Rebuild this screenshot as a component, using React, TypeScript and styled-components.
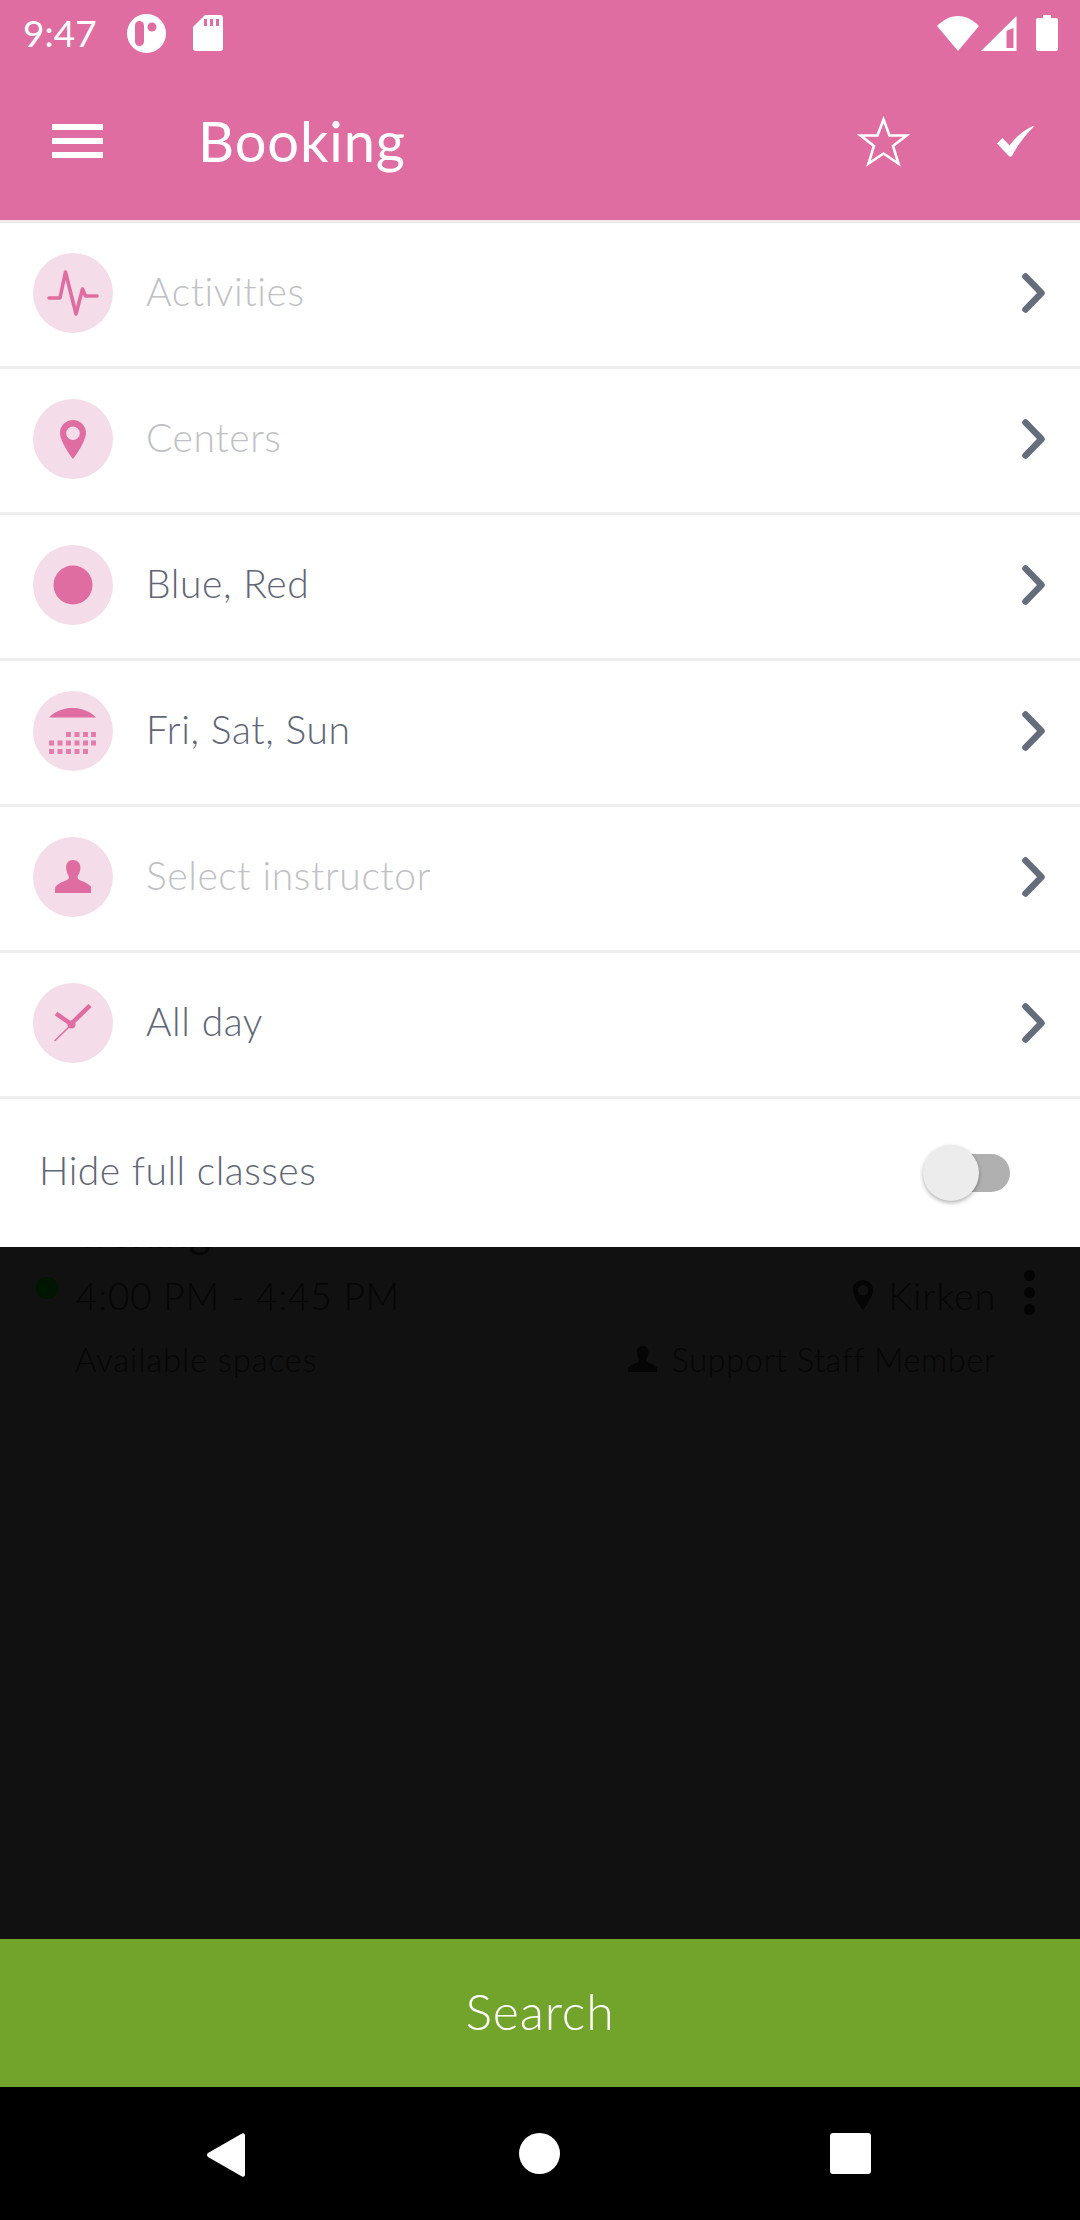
import React from "react";
import styled, { createGlobalStyle } from "styled-components";

const pink = "#df6da2";

const Global = createGlobalStyle`
  html, body { margin: 0; padding: 0; background: #111; }
  body { font-family: "Lato", "Noto Sans", sans-serif; }
`;

const Screen = styled.div`
  width: 1080px;
  height: 2220px;
  display: flex;
  flex-direction: column;
  overflow: hidden;
  background: #111;
`;

const Header = styled.header`
  height: 220px;
  background: ${pink};
  color: #fff;
  display: flex;
  flex-direction: column;
  flex: none;
`;

const StatusBar = styled.div`
  height: 66px;
  padding: 0 22px 0 23px;
  display: flex;
  align-items: center;
  box-sizing: border-box;
`;

const Clock = styled.span`
  font-size: 37px;
  font-weight: 400;
  line-height: 66px;
  width: 104px;
`;

const StatusRight = styled.div`
  margin-left: auto;
  display: flex;
  align-items: center;
`;

const AppBar = styled.div`
  flex: 1;
  display: flex;
  align-items: center;
  padding: 0 46px 4px 52px;
`;

const Title = styled.h1`
  margin: 0 0 0 95px;
  font-size: 56px;
  line-height: 64px;
  font-weight: 400;
  letter-spacing: 0.9px;
  flex: 1;
`;

const BarButton = styled.span<{ $gap?: number }>`
  display: flex;
  margin-right: ${(p) => p.$gap ?? 0}px;
`;

const Panel = styled.section`
  flex: none;
  background: #fff;
  border-top: 3px solid #efe9ee;
`;

const Row = styled.div`
  box-sizing: border-box;
  border-bottom: 3px solid #eeeeee;
  height: 146px;
  padding: 0 35px 3px 33px;
  display: flex;
  align-items: center;
`;

const IconCircle = styled.div`
  width: 80px;
  height: 80px;
  border-radius: 50%;
  background: #f4dce9;
  display: flex;
  align-items: center;
  justify-content: center;
  flex: none;
`;

const RowLabel = styled.span<{ $empty?: boolean }>`
  margin: 0 0 5px 33px;
  flex: 1;
  font-size: 39px;
  font-weight: 300;
  letter-spacing: 0.6px;
  color: ${(p) => (p.$empty ? "#bfc1c6" : "#5f6676")};
`;

const ToggleRow = styled.div`
  height: 148px;
  padding: 0 70px 0 39px;
  display: flex;
  align-items: center;
  justify-content: space-between;
`;

const ToggleLabel = styled.span`
  font-size: 39px;
  font-weight: 300;
  letter-spacing: 0.5px;
  color: #5f6676;
  margin-bottom: 6px;
`;

const Toggle = styled.div`
  position: relative;
  width: 80px;
  height: 38px;
  border-radius: 19px;
  background: #b0b0b0;
`;

const Thumb = styled.div`
  position: absolute;
  left: -7px;
  top: -9px;
  width: 56px;
  height: 56px;
  border-radius: 50%;
  background: #ececec;
  box-shadow: 0 2px 4px rgba(0, 0, 0, 0.3);
`;

const Behind = styled.div`
  flex: 1;
  background: #111;
  color: #060606;
  overflow: hidden;
  display: flex;
  flex-direction: column;
  padding: 0 0 0 36px;
`;

const GhostTitle = styled.div`
  margin: -42px 0 0 39px;
  height: 54px;
  font-size: 42px;
  line-height: 54px;
  font-weight: 400;
`;

const GhostLine = styled.div<{ $top: number }>`
  display: flex;
  align-items: center;
  margin-top: ${(p) => p.$top}px;
  padding-right: 84px;
  position: relative;
`;

const Dot = styled.div`
  width: 22px;
  height: 22px;
  border-radius: 50%;
  background: #001600;
  margin: 0 18px 14px 0;
  flex: none;
`;

const GhostTime = styled.span`
  font-size: 37px;
  font-weight: 300;
  letter-spacing: 0.8px;
`;

const GhostPlace = styled.span`
  font-size: 38px;
  font-weight: 300;
  letter-spacing: 0.7px;
`;

const GhostSmall = styled.span`
  font-size: 33px;
  font-weight: 300;
  letter-spacing: 0.8px;
  margin-left: 39px;
`;

const GhostStaff = styled.span`
  font-size: 32.5px;
  font-weight: 300;
  letter-spacing: 0.6px;
`;

const GhostRight = styled.span`
  margin-left: auto;
  display: flex;
  align-items: center;
  gap: 15px;
`;

const More = styled.div`
  position: absolute;
  right: 45px;
  top: -2px;
  display: flex;
  flex-direction: column;
  gap: 6px;
`;

const MoreDot = styled.i`
  display: block;
  width: 11px;
  height: 11px;
  border-radius: 50%;
  background: #040404;
`;

const SearchBar = styled.button`
  flex: none;
  height: 148px;
  border: 0;
  background: #72a42b;
  color: #fff;
  font-family: inherit;
  font-size: 50px;
  font-weight: 300;
  letter-spacing: 0.8px;
  padding: 0 0 4px;
`;

const NavBar = styled.nav`
  flex: none;
  height: 133px;
  background: #000;
  display: flex;
  align-items: flex-start;
  padding-top: 46px;
  box-sizing: border-box;
`;

const NavSlot = styled.div<{ $left: number }>`
  margin-left: ${(p) => p.$left}px;
  display: flex;
`;

const Chevron = () => (
  <svg width="23" height="40" viewBox="0 0 23 40" fill="none">
    <path d="M3.500 3.500 19.500 20 3.500 36.500" stroke="#656c7b" strokeWidth="6.500" strokeLinecap="round" strokeLinejoin="round" />
  </svg>
);

const Pulse = () => (
  <svg width="52" height="50" viewBox="0 0 52 50" fill="none">
    <path d="M2 30h11l5.500-26 10.500 42 6.500-25 3 7h11.500" stroke={pink} strokeWidth="3.600" strokeLinecap="round" strokeLinejoin="round" />
  </svg>
);

const Pin = () => (
  <svg width="26" height="39" viewBox="0 0 26 39">
    <path fillRule="evenodd" fill={pink} d="M13 0C5.800 0 0 5.700 0 12.900 0 22 13 39 13 39s13-17 13-26.100C26 5.700 20.200 0 13 0Zm0 6.500a6.800 6.800 0 1 1 0 13.600 6.800 6.800 0 0 1 0-13.600Z" />
  </svg>
);

const Disc = () => (
  <svg width="40" height="40" viewBox="0 0 40 40">
    <circle cx="20" cy="20" r="19.500" fill={pink} />
  </svg>
);

const Cal = () => (
  <svg width="50" height="48" viewBox="0 0 50 48">
    <path d="M1 10.500C8 3.500 16 1 24.500 1 33 1 41 3.500 48 10.500Z" fill={pink} />
    <g fill={pink} opacity="0.85">
      {[17, 25.500, 34, 42].map((x) => <rect key={"a" + x} x={x + 1} y="25" width="5" height="5" />)}
      {[0, 8.500, 17, 25.500, 34, 42].map((x) => <rect key={"b" + x} x={x + 1} y="33.500" width="5" height="5" />)}
      {[0, 8.500, 17, 25.500, 34].map((x) => <rect key={"c" + x} x={x + 1} y="42" width="5" height="5" />)}
    </g>
  </svg>
);

const Person = ({ color = pink, w = 36 }: { color?: string; w?: number }) => (
  <svg width={w} height={w * 0.92} viewBox="0 0 36 33">
    <path fill={color} d="M18 0c4.600 0 7.400 3.300 7.400 7.600 0 3.300-1.200 5.600-2.400 8-.7 1.400-.6 3 .7 3.800 3.500 2 9 3.200 12.300 7.200.500 1 .500 4 .500 6.400H0c0-2.400 0-5.400.500-6.400 3.300-4 8.800-5.200 12.300-7.200 1.300-.8 1.400-2.400.7-3.800-1.200-2.400-2.400-4.700-2.400-8C11.100 3.300 13.400 0 18 0Z" />
  </svg>
);

const Clockface = () => (
  <svg width="38" height="38" viewBox="0 0 38 38" fill="none">
    <path d="M2 9.500 17 20" stroke={pink} strokeWidth="4.500" />
    <path d="M36 1.500 16 21" stroke={pink} strokeWidth="4.500" />
    <path d="M17 21 0.500 37" stroke={pink} strokeWidth="1.500" />
    <circle cx="17.500" cy="20.500" r="4" fill={pink} />
  </svg>
);

const rows: { icon: React.ReactNode; label: string; empty?: boolean }[] = [
  { icon: <Pulse />, label: "Activities", empty: true },
  { icon: <Pin />, label: "Centers", empty: true },
  { icon: <Disc />, label: "Blue, Red" },
  { icon: <Cal />, label: "Fri, Sat, Sun" },
  { icon: <Person />, label: "Select instructor", empty: true },
  { icon: <Clockface />, label: "All day" },
];

export default function App() {
  return (
    <Screen>
      <Global />
      <Header>
        <StatusBar>
          <Clock>9:47</Clock>
          <svg width="39" height="39" viewBox="0 0 39 39" style={{ marginRight: 27 }}>
            <circle cx="19.500" cy="19.500" r="19.500" fill="#fff" />
            <rect x="8" y="7" width="9" height="25" rx="4.500" fill={pink} />
            <circle cx="25" cy="13" r="4.500" fill={pink} />
          </svg>
          <svg width="30" height="36" viewBox="0 0 30 36">
            <path fill="#fff" fillRule="evenodd" d="M12 0h15a3 3 0 0 1 3 3v30a3 3 0 0 1-3 3H3a3 3 0 0 1-3-3V12ZM11 4v7h3V4Zm6 0v7h3V4Zm6 0v7h3V4Z" />
          </svg>
          <StatusRight>
            <svg width="42" height="35" viewBox="0 0 42 35" style={{ marginRight: 2 }}>
              <path fill="#fff" d="M21 35 0 10C6 4 13 0 21 0s15 4 21 10Z" />
            </svg>
            <svg width="36" height="35" viewBox="0 0 36 35" style={{ marginRight: 19 }}>
              <path fill="#fff" fillRule="evenodd" d="M35.500 0v35H0ZM25.500 15v17h7V12Z" />
            </svg>
            <svg width="22" height="36" viewBox="0 0 22 36">
              <path fill="#fff" d="M7 0h8v3h5a2 2 0 0 1 2 2v29a2 2 0 0 1-2 2H2a2 2 0 0 1-2-2V5a2 2 0 0 1 2-2h5Z" />
            </svg>
          </StatusRight>
        </StatusBar>
        <AppBar>
          <svg width="51" height="35" viewBox="0 0 51 35">
            <path fill="#fff" d="M0 0h51v6H0zM0 14h51v6H0zM0 28h51v6H0z" />
          </svg>
          <Title>Booking</Title>
          <BarButton $gap={87}>
            <svg width="53" height="51" viewBox="0 0 53 51" fill="none">
              <path d="M26.500 3.500 32.500 19.500H49.500L36 30 41.500 47.500 26.500 37.500 11.500 47.500 17 30 3.500 19.500H20.500Z" stroke="#fff" strokeWidth="2.600" />
            </svg>
          </BarButton>
          <BarButton>
            <svg width="37" height="31" viewBox="0 0 37 31">
              <path fill="#fff" d="M0 17.500 5.500 12l7 7.500C18.500 11 27 4 36 0c.5 0 1 .5.500 1-8 8-16 18-21 28-.7 2-2.500 2.300-4 .7Z" />
            </svg>
          </BarButton>
        </AppBar>
      </Header>
      <Panel>
        {rows.map((r) => (
          <Row key={r.label}>
            <IconCircle>{r.icon}</IconCircle>
            <RowLabel $empty={r.empty}>{r.label}</RowLabel>
            <Chevron />
          </Row>
        ))}
        <ToggleRow>
          <ToggleLabel>Hide full classes</ToggleLabel>
          <Toggle>
            <Thumb />
          </Toggle>
        </ToggleRow>
      </Panel>
      <Behind>
        <GhostTitle>Trening</GhostTitle>
        <GhostLine $top={13}>
          <Dot />
          <GhostTime>4:00 PM - 4:45 PM</GhostTime>
          <GhostRight>
            <svg width="20" height="30" viewBox="0 0 26 39">
              <path fillRule="evenodd" fill="#050505" d="M13 0C5.800 0 0 5.700 0 12.900 0 22 13 39 13 39s13-17 13-26.100C26 5.700 20.200 0 13 0Zm0 6.500a6.800 6.800 0 1 1 0 13.600 6.800 6.800 0 0 1 0-13.600Z" />
            </svg>
            <GhostPlace>Kirken</GhostPlace>
          </GhostRight>
          <More>
            <MoreDot />
            <MoreDot />
            <MoreDot />
          </More>
        </GhostLine>
        <GhostLine $top={21}>
          <GhostSmall>Available spaces</GhostSmall>
          <GhostRight>
            <Person color="#050505" w={29} />
            <GhostStaff>Support Staff Member</GhostStaff>
          </GhostRight>
        </GhostLine>
      </Behind>
      <SearchBar>Search</SearchBar>
      <NavBar>
        <NavSlot $left={207}>
          <svg width="38" height="44" viewBox="0 0 38 44">
            <path fill="#fff" d="M1 24a2.500 2.500 0 0 1 0-4L35 .5A2 2 0 0 1 38 2v40a2 2 0 0 1-3 1.500Z" />
          </svg>
        </NavSlot>
        <NavSlot $left={274}>
          <svg width="41" height="41" viewBox="0 0 41 41">
            <circle cx="20.500" cy="20.500" r="20.500" fill="#fff" />
          </svg>
        </NavSlot>
        <NavSlot $left={270}>
          <svg width="41" height="41" viewBox="0 0 41 41">
            <rect width="41" height="41" rx="3" fill="#fff" />
          </svg>
        </NavSlot>
      </NavBar>
    </Screen>
  );
}
